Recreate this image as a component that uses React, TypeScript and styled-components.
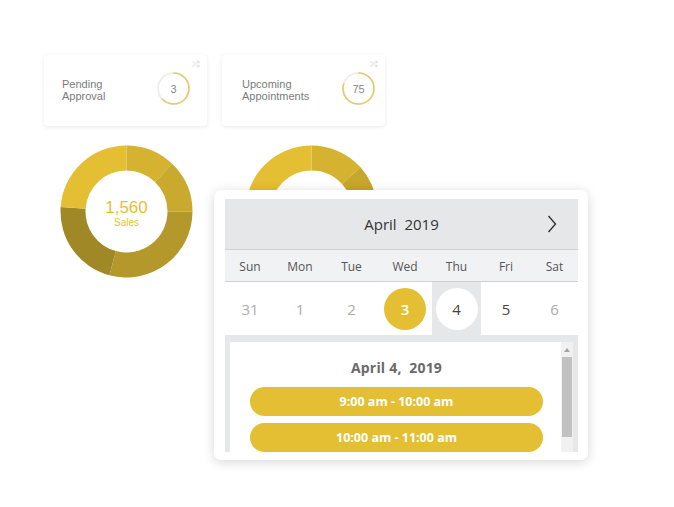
import React from "react";
import styled, { createGlobalStyle } from "styled-components";
import { Shuffle } from "lucide-react";

const GlobalStyle = createGlobalStyle`
  html, body { margin: 0; padding: 0; background: #ffffff; }
  body { font-family: "Liberation Sans", Arial, sans-serif; }
`;

const GOLD = "#e4bf33";

const Page = styled.div`
  position: relative;
  width: 674px;
  height: 507px;
  padding: 55px 0 0 44px;
  box-sizing: border-box;
  overflow: hidden;
`;

const StatRow = styled.div`
  display: flex;
  gap: 15px;
`;

const StatCard = styled.div<{ $padLeft: number }>`
  position: relative;
  width: 163px;
  height: 71px;
  box-sizing: border-box;
  padding-left: ${(p) => p.$padLeft}px;
  background: #fff;
  border-radius: 4px;
  box-shadow: 0 1px 4px rgba(0, 0, 0, 0.09);
  display: flex;
  align-items: center;
`;

const StatLabel = styled.div<{ $width: number }>`
  width: ${(p) => p.$width}px;
  font-family: "Liberation Sans", Arial, sans-serif;
  font-size: 11px;
  line-height: 12px;
  color: #7b7b7b;
  margin-top: -1px;
`;

const RingWrap = styled.div`
  position: relative;
  width: 33px;
  height: 33px;
  margin-top: -4px;
  display: flex;
  align-items: center;
  justify-content: center;
`;

const RingSvg = styled.svg`
  position: absolute;
  inset: 0;
  transform: rotate(-90deg);
`;

const RingValue = styled.span`
  position: relative;
  font-family: "Liberation Sans", Arial, sans-serif;
  font-size: 11px;
  color: #888;
`;

const CornerIcon = styled.div`
  position: absolute;
  top: 5px;
  right: 7px;
  color: #cfcfcf;
  display: flex;
`;

const DonutRow = styled.div`
  display: flex;
  gap: 52px;
  margin: 19px 0 0 16px;
`;

const DonutBox = styled.div`
  position: relative;
  width: 133px;
  height: 133px;
  display: flex;
  flex-direction: column;
  align-items: center;
  justify-content: center;
`;

const DonutSvg = styled.svg`
  position: absolute;
  inset: 0;
`;

const DonutValue = styled.div`
  position: relative;
  font-family: "Liberation Sans", Arial, sans-serif;
  font-size: 17px;
  line-height: 18px;
  color: ${GOLD};
  margin-top: 4px;
`;

const DonutCaption = styled.div`
  position: relative;
  font-family: "Liberation Sans", Arial, sans-serif;
  font-size: 10px;
  line-height: 12px;
  color: ${GOLD};
`;

const Popup = styled.div`
  position: absolute;
  left: 214px;
  top: 190px;
  width: 374px;
  height: 270px;
  box-sizing: border-box;
  padding: 9px 10px 8px 11px;
  background: #fff;
  border-radius: 7px;
  box-shadow: 0 2px 12px rgba(0, 0, 0, 0.16);
  display: flex;
  flex-direction: column;
  font-family: "Open Sans", "Liberation Sans", sans-serif;
`;

const MonthBar = styled.div`
  height: 50px;
  background: #e6e7e9;
  border-bottom: 1px solid #cfd0d3;
  display: grid;
  grid-template-columns: 52px 1fr 52px;
  align-items: center;
`;

const MonthTitle = styled.div`
  grid-column: 2;
  text-align: center;
  font-size: 15px;
  color: #333;
  white-space: pre;
`;

const NavButton = styled.div`
  grid-column: 3;
  display: flex;
  justify-content: center;
  align-items: center;
  color: #333;
`;

const Grid7 = styled.div`
  display: grid;
  grid-template-columns: 50px 50px 53px 54px 49px 50px 47px;
`;

const WeekRow = styled(Grid7)`
  height: 31px;
  background: #f1f2f4;
  border-bottom: 1px solid #cfd0d3;
  align-items: center;
`;

const WeekName = styled.div`
  text-align: center;
  font-size: 12px;
  color: #555;
  padding-top: 2px;
`;

const DateRow = styled(Grid7)`
  height: 53px;
  background: #fff;
`;

const DateCell = styled.div<{ $shaded?: boolean }>`
  display: flex;
  align-items: center;
  justify-content: center;
  background: ${(p) => (p.$shaded ? "#e6e7e9" : "transparent")};
`;

const DateNum = styled.div<{ $variant: "muted" | "normal" | "selected" | "today" }>`
  width: 42px;
  height: 42px;
  border-radius: 50%;
  display: flex;
  align-items: center;
  justify-content: center;
  font-size: 15px;
  font-weight: ${(p) => (p.$variant === "selected" ? 600 : 400)};
  color: ${(p) =>
    p.$variant === "muted" ? "#acacac" : p.$variant === "selected" ? "#fff" : "#444"};
  background: ${(p) =>
    p.$variant === "selected" ? GOLD : p.$variant === "today" ? "#fff" : "transparent"};
`;

const Agenda = styled.div`
  flex: 1;
  min-height: 0;
  background: #e6e7e9;
  padding: 7px 5px 0 5px;
  display: flex;
`;

const AgendaPanel = styled.div`
  width: 331px;
  background: #fff;
  overflow: hidden;
  display: flex;
  flex-direction: column;
  padding: 16px 18px 0 20px;
  box-sizing: border-box;
  gap: 7px;
`;

const AgendaDate = styled.div`
  text-align: center;
  font-size: 14px;
  font-weight: 700;
  color: #6a6a6a;
  white-space: pre;
  margin-bottom: 3px;
  letter-spacing: 0.2px;
`;

const SlotButton = styled.div`
  flex: none;
  height: 29px;
  border-radius: 15px;
  background: ${GOLD};
  color: #fff;
  font-size: 12.5px;
  font-weight: 700;
  display: flex;
  align-items: center;
  justify-content: center;
`;

const ScrollTrack = styled.div`
  width: 12px;
  background: #f1f1f1;
  display: flex;
  flex-direction: column;
  align-items: center;
`;

const ScrollArrow = styled.div`
  height: 15px;
  display: flex;
  align-items: center;
  justify-content: center;
  &::before {
    content: "";
    border-left: 3px solid transparent;
    border-right: 3px solid transparent;
    border-bottom: 4px solid #a3a3a3;
  }
`;

const ScrollThumb = styled.div`
  width: 10px;
  height: 80px;
  background: #c1c1c1;
`;

function Ring({ pct }: { pct: number }) {
  const r = 15.5;
  const c = 2 * Math.PI * r;
  return (
    <RingSvg width={33} height={33} viewBox="0 0 33 33">
      <circle cx={16.5} cy={16.5} r={r} fill="none" stroke="#ebebeb" strokeWidth={1.6} />
      <circle
        cx={16.5}
        cy={16.5}
        r={r}
        fill="none"
        stroke="#e7c86a"
        strokeWidth={1.6}
        strokeDasharray={`${c * pct} ${c}`}
      />
    </RingSvg>
  );
}

function sector(cx: number, cy: number, ro: number, ri: number, a0: number, a1: number) {
  const rad = (a: number) => (a * Math.PI) / 180;
  const pt = (r: number, a: number) => [cx + r * Math.sin(rad(a)), cy - r * Math.cos(rad(a))];
  const large = a1 - a0 > 180 ? 1 : 0;
  const [x0, y0] = pt(ro, a0);
  const [x1, y1] = pt(ro, a1);
  const [x2, y2] = pt(ri, a1);
  const [x3, y3] = pt(ri, a0);
  return `M${x0} ${y0} A${ro} ${ro} 0 ${large} 1 ${x1} ${y1} L${x2} ${y2} A${ri} ${ri} 0 ${large} 0 ${x3} ${y3} Z`;
}

type Seg = { from: number; to: number; color: string };

const donutA: Seg[] = [
  { from: 0, to: 44, color: "#d5b22f" },
  { from: 44, to: 90, color: "#c9a92e" },
  { from: 90, to: 195, color: "#b5982b" },
  { from: 195, to: 274, color: "#a18826" },
  { from: 274, to: 360, color: "#e4bf33" },
];

const donutB: Seg[] = [
  { from: 0, to: 48, color: "#d5b22f" },
  { from: 48, to: 120, color: "#c6a62d" },
  { from: 120, to: 200, color: "#b5982b" },
  { from: 200, to: 270, color: "#a18826" },
  { from: 270, to: 360, color: "#e4bf33" },
];

function Donut({ segs, value, caption }: { segs: Seg[]; value?: string; caption?: string }) {
  return (
    <DonutBox>
      <DonutSvg width={133} height={133} viewBox="0 0 133 133">
        {segs.map((s, i) => (
          <path key={i} d={sector(66.5, 66.5, 66, 41, s.from, s.to)} fill={s.color} />
        ))}
      </DonutSvg>
      {value && <DonutValue>{value}</DonutValue>}
      {caption && <DonutCaption>{caption}</DonutCaption>}
    </DonutBox>
  );
}

const weekNames = ["Sun", "Mon", "Tue", "Wed", "Thu", "Fri", "Sat"];
const dates: { n: string; v: "muted" | "normal" | "selected" | "today"; shaded?: boolean }[] = [
  { n: "31", v: "muted" },
  { n: "1", v: "muted" },
  { n: "2", v: "muted" },
  { n: "3", v: "selected" },
  { n: "4", v: "today", shaded: true },
  { n: "5", v: "normal" },
  { n: "6", v: "muted" },
];

export default function App() {
  return (
    <>
      <GlobalStyle />
      <Page>
        <StatRow>
          <StatCard $padLeft={18}>
            <StatLabel $width={95}>
              Pending
              <br />
              Approval
            </StatLabel>
            <RingWrap>
              <Ring pct={0.63} />
              <RingValue>3</RingValue>
            </RingWrap>
            <CornerIcon>
              <Shuffle size={8} strokeWidth={2} />
            </CornerIcon>
          </StatCard>
          <StatCard $padLeft={20}>
            <StatLabel $width={100}>
              Upcoming
              <br />
              Appointments
            </StatLabel>
            <RingWrap>
              <Ring pct={0.8} />
              <RingValue>75</RingValue>
            </RingWrap>
            <CornerIcon>
              <Shuffle size={8} strokeWidth={2} />
            </CornerIcon>
          </StatCard>
        </StatRow>

        <DonutRow>
          <Donut segs={donutA} value="1,560" caption="Sales" />
          <Donut segs={donutB} />
        </DonutRow>

        <Popup>
          <MonthBar>
            <MonthTitle>{"April  2019"}</MonthTitle>
            <NavButton>
              <svg width="10" height="18" viewBox="0 0 10 18">
                <polyline points="1.5,1 8.5,9 1.5,17" fill="none" stroke="#333" strokeWidth="1.4" />
              </svg>
            </NavButton>
          </MonthBar>
          <WeekRow>
            {weekNames.map((w) => (
              <WeekName key={w}>{w}</WeekName>
            ))}
          </WeekRow>
          <DateRow>
            {dates.map((d) => (
              <DateCell key={d.n} $shaded={d.shaded}>
                <DateNum $variant={d.v}>{d.n}</DateNum>
              </DateCell>
            ))}
          </DateRow>
          <Agenda>
            <AgendaPanel>
              <AgendaDate>{"April 4,  2019"}</AgendaDate>
              <SlotButton>9:00 am - 10:00 am</SlotButton>
              <SlotButton>10:00 am - 11:00 am</SlotButton>
            </AgendaPanel>
            <ScrollTrack>
              <ScrollArrow />
              <ScrollThumb />
            </ScrollTrack>
          </Agenda>
        </Popup>
      </Page>
    </>
  );
}
